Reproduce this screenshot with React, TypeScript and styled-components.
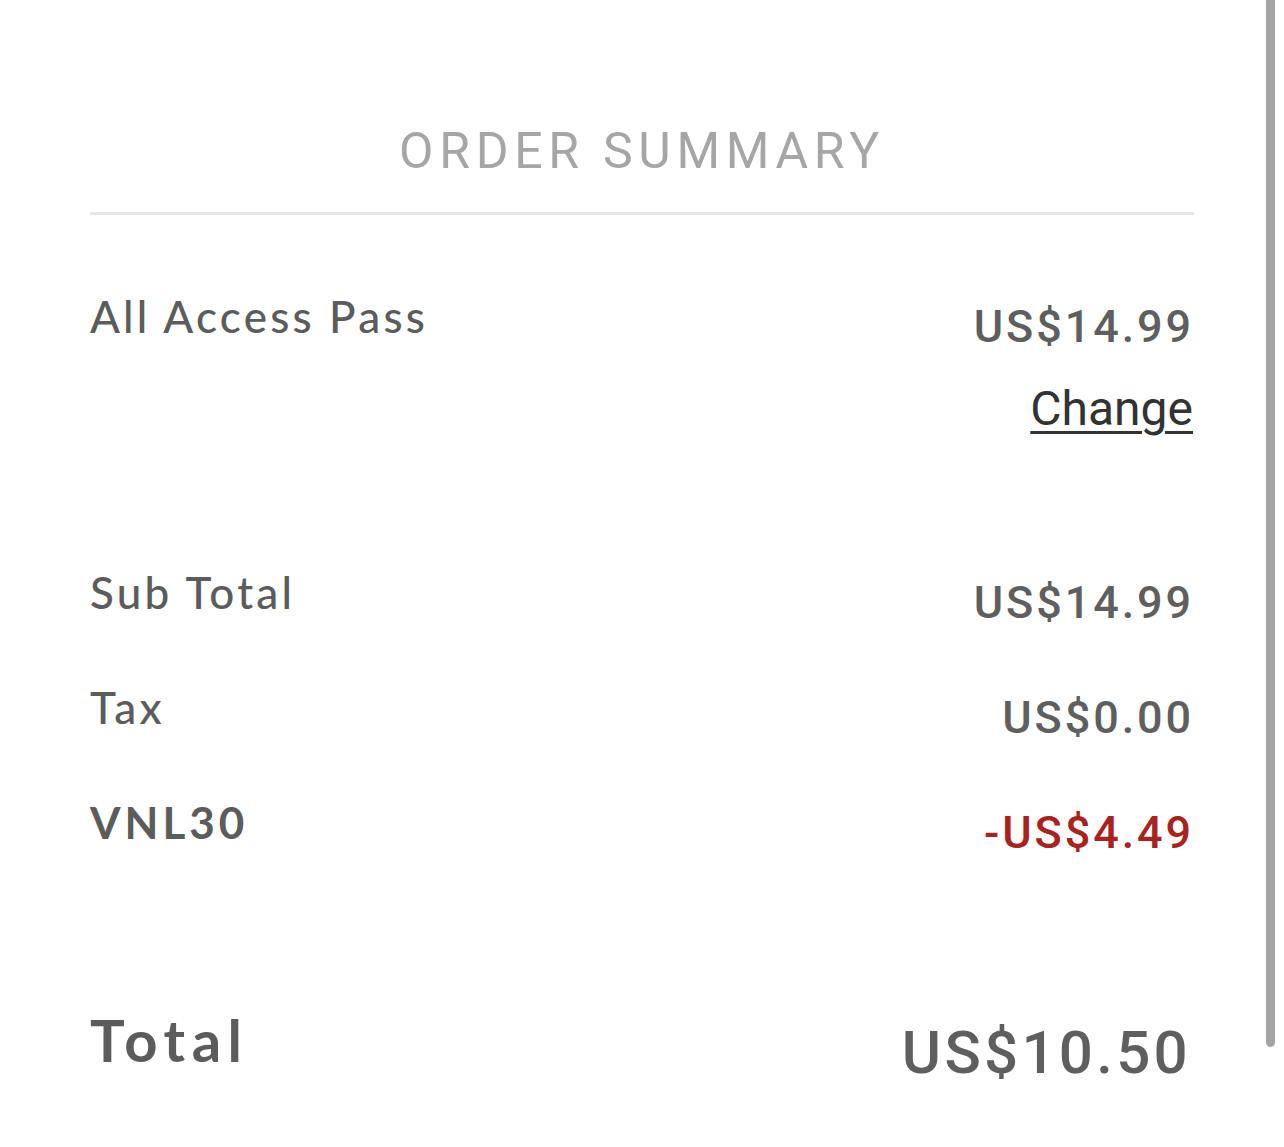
import React from "react";
import styled, { createGlobalStyle } from "styled-components";

const Global = createGlobalStyle`
  html, body { margin: 0; padding: 0; background: #ffffff; }
  body { font-family: "Lato", "Noto Sans", sans-serif; }
`;

const Page = styled.div`
  width: 1284px;
  min-height: 1147px;
  box-sizing: border-box;
  padding: 121px 90px 0 90px;
  display: flex;
  flex-direction: column;
`;

const Heading = styled.h2`
  margin: 0;
  font-family: "Roboto", sans-serif;
  font-weight: 400;
  font-size: 50px;
  line-height: 60px;
  letter-spacing: 5.7px;
  color: #a6a6a6;
  text-align: center;
`;

const Divider = styled.hr`
  margin: 31px 0 0 0;
  border: none;
  height: 3px;
  background: #e6e6e6;
`;

const Section = styled.div<{ $top: number; $gap: number }>`
  margin-top: ${(p) => p.$top}px;
  display: flex;
  flex-direction: column;
  gap: ${(p) => p.$gap}px;
`;

const Row = styled.div`
  display: flex;
  justify-content: space-between;
  align-items: flex-start;
`;

const Label = styled.div<{ $bold?: boolean; $big?: boolean }>`
  font-family: "Lato", "Noto Sans", sans-serif;
  font-size: ${(p) => (p.$big ? 58 : 44)}px;
  font-weight: ${(p) => (p.$bold ? 700 : 500)};
  line-height: 60px;
  color: #5c5c5c;
  letter-spacing: ${(p) => (p.$big ? 6.5 : p.$bold ? 4 : 3.2)}px;
`;

const Amounts = styled.div`
  display: flex;
  flex-direction: column;
  align-items: flex-end;
`;

const Price = styled.div<{ $red?: boolean; $big?: boolean }>`
  font-family: "Roboto", sans-serif;
  font-weight: 500;
  font-size: ${(p) => (p.$big ? 60 : 45)}px;
  line-height: 60px;
  letter-spacing: ${(p) => (p.$big ? 3.3 : 2.9)}px;
  color: ${(p) => (p.$red ? "#a82320" : "#5f5f5f")};
  margin-top: ${(p) => (p.$big ? 13 : 11)}px;
  margin-right: ${(p) => (p.$big ? 3 : 0)}px;
`;

const ChangeLink = styled.a`
  font-family: "Roboto", sans-serif;
  font-weight: 400;
  font-size: 48px;
  line-height: 60px;
  color: #333333;
  text-decoration: underline;
  text-decoration-thickness: 3px;
  text-underline-offset: 6px;
  margin-top: 22px;
  margin-right: 1px;
  cursor: pointer;
`;

const ScrollThumb = styled.div`
  position: fixed;
  top: 0;
  left: 1266px;
  width: 9px;
  height: 1047px;
  background: #a4a4a4;
  border-radius: 0 0 5px 5px;
`;

export default function App() {
  return (
    <>
      <Global />
      <Page>
        <Heading>ORDER SUMMARY</Heading>
        <Divider />
        <Section $top={71} $gap={0}>
          <Row>
            <Label>All Access Pass</Label>
            <Amounts>
              <Price>US$14.99</Price>
              <ChangeLink>Change</ChangeLink>
            </Amounts>
          </Row>
        </Section>
        <Section $top={123} $gap={44}>
          <Row>
            <Label>Sub Total</Label>
            <Price>US$14.99</Price>
          </Row>
          <Row>
            <Label>Tax</Label>
            <Price>US$0.00</Price>
          </Row>
          <Row>
            <Label $bold>VNL30</Label>
            <Price $red>-US$4.49</Price>
          </Row>
        </Section>
        <Section $top={147} $gap={0}>
          <Row>
            <Label $bold $big>Total</Label>
            <Price $big>US$10.50</Price>
          </Row>
        </Section>
      </Page>
      <ScrollThumb />
    </>
  );
}
